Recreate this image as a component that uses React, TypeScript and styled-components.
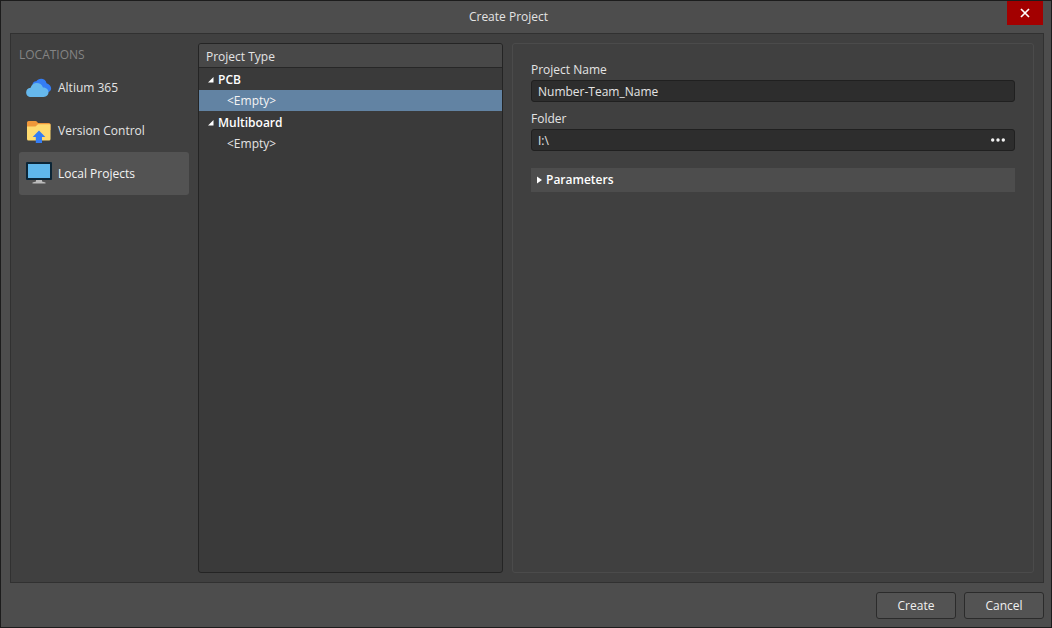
import React, { useState } from 'react';
import styled, { createGlobalStyle } from 'styled-components';

const GlobalStyle = createGlobalStyle`
  *, *::before, *::after { box-sizing: border-box; }
  body { margin: 0; background: #4d4d4d; }
  body, button, input {
    font-family: "Open Sans", "Noto Sans", sans-serif;
    font-size: 12px;
    line-height: 16px;
    color: #e4e4e4;
  }
  button { border: 0; padding: 0; background: none; text-align: left; }
`;

const Dialog = styled.main`
  display: flex;
  flex-direction: column;
  min-height: 100vh;
  padding: 0 7px 0 9px;
  border: 1px solid #1c1c1c;
  background: #4d4d4d;
`;

const TitleBar = styled.header`
  display: grid;
  grid-template-columns: 1fr 36px;
  height: 32px;
  padding-right: 1px;
`;

const Title = styled.h1`
  margin: 0;
  font-size: 12px;
  font-weight: 400;
  line-height: 32px;
  text-align: center;
`;

const CloseButton = styled.button`
  display: flex;
  align-items: center;
  justify-content: center;
  height: 24px;
  background: #a30000;
`;

const Body = styled.div`
  flex: 1;
  display: grid;
  grid-template-columns: 170px 305px 1fr;
  column-gap: 9px;
  padding: 9px 9px 9px 8px;
  border: 1px solid #313131;
  background: #404040;
`;

const Locations = styled.nav`
  display: flex;
  flex-direction: column;
`;

const LocationsHeading = styled.h2`
  margin: 0 0 3px;
  padding-top: 4px;
  font-size: 12px;
  font-weight: 400;
  line-height: 16px;
  color: #848484;
`;

const LocationButton = styled.button<{ $active?: boolean }>`
  display: flex;
  align-items: center;
  gap: 6px;
  height: 43px;
  padding-left: 7px;
  border-radius: 3px;
  color: ${(p) => (p.$active ? '#f4f4f4' : '#e4e4e4')};
  background: ${(p) => (p.$active ? '#535353' : 'transparent')};
`;

const TypePanel = styled.section`
  border: 1px solid #242424;
  border-radius: 3px;
  background: #3a3a3a;
`;

const TypeHeading = styled.h2`
  margin: 0 0 1px;
  padding: 2px 7px 0;
  border-bottom: 1px solid #272727;
  border-radius: 2px 2px 0 0;
  background: #484848;
  font-size: 12px;
  font-weight: 400;
  line-height: 21px;
`;

const Group = styled.div`
  display: flex;
  flex-direction: column;
  margin-bottom: 1px;
`;

const GroupButton = styled.button`
  display: flex;
  align-items: center;
  gap: 4px;
  height: 21px;
  padding-left: 9px;
  font-weight: 600;
  color: #ffffff;
`;

const TypeButton = styled.button<{ $selected: boolean }>`
  height: 21px;
  padding-left: 28px;
  color: ${(p) => (p.$selected ? '#f4f4f4' : '#e4e4e4')};
  background: ${(p) => (p.$selected ? '#6283a3' : 'transparent')};
`;

const Details = styled.form`
  display: flex;
  flex-direction: column;
  padding: 18px;
  border: 1px solid #4b4b4b;
  border-radius: 3px;
`;

const Field = styled.div`
  display: flex;
  flex-direction: column;
  gap: 2px;
  margin-bottom: 9px;
`;

const InputBox = styled.div`
  display: flex;
  align-items: center;
  height: 22px;
  border: 1px solid #202020;
  border-radius: 3px;
  background: #2d2d2d;
`;

const TextInput = styled.input`
  flex: 1;
  min-width: 0;
  padding: 2px 6px 0;
  border: 0;
  outline: 0;
  background: transparent;
`;

const BrowseButton = styled.button`
  display: flex;
  align-items: center;
  justify-content: center;
  width: 32px;
  height: 20px;
`;

const SectionButton = styled.button`
  display: flex;
  align-items: center;
  gap: 4px;
  height: 24px;
  margin-top: 8px;
  padding-left: 6px;
  background: #4d4d4d;
  font-weight: 600;
  color: #ffffff;
`;

const Footer = styled.footer`
  display: flex;
  justify-content: flex-end;
  gap: 8px;
  padding: 9px 0 8px;
`;

const ActionButton = styled.button`
  width: 80px;
  height: 27px;
  border: 1px solid #2b2b2b;
  border-radius: 3px;
  background: #535353;
  text-align: center;
  color: #f0f0f0;
`;

const CloudIcon = () => (
  <svg width="26" height="26" viewBox="0 0 26 26" aria-hidden="true">
    <path d="M7 12C5.500 9 7.500 6 10.300 6.200C12.500 2.500 19.500 2.600 20.600 8.200C27 10.500 26.500 17.500 20 17.500H10Z" fill="#347df4" />
    <path d="M5.300 22C-1.500 22 -1.400 13.200 4.600 12.800C6 6.700 15 6.300 17 12.400C24.300 12.400 24.200 22 17.500 22Z" fill="#66b8ec" />
  </svg>
);

const FolderIcon = () => (
  <svg width="26" height="26" viewBox="0 0 26 26" aria-hidden="true">
    <path d="M1 12V4.500Q1 3 2.500 3H9.500Q10.500 3 11 3.800L12 5H23Q24.500 5 24.500 6.500V12Z" fill="#f0983a" />
    <path d="M1 8.500H9.500L12 6.300H24.500V21Q24.500 22.500 23 22.500H2.500Q1 22.500 1 21Z" fill="#ffdb70" />
    <path d="M13 12.500L19.300 19H16V25H9.800V19H6.700Z" fill="#347df4" />
  </svg>
);

const MonitorIcon = () => (
  <svg width="26" height="26" viewBox="0 0 26 26" aria-hidden="true">
    <rect x="0" y="1" width="26" height="18" rx="1" fill="#0c2637" />
    <rect x="2" y="3" width="22" height="14" fill="#60b8ec" />
    <path d="M10 19H16V20.500L19.500 21.500V22.500H6.500V21.500L10 20.500Z" fill="#bcbcbc" />
  </svg>
);

const CloseIcon = () => (
  <svg width="10" height="10" viewBox="0 0 10 10" aria-hidden="true">
    <path d="M1 1L9 9M9 1L1 9" stroke="#ffffff" strokeWidth="1.700" />
  </svg>
);

const ExpandedIcon = () => (
  <svg width="6" height="6" viewBox="0 0 6 6" aria-hidden="true">
    <path d="M5.500 0V5.500H0Z" fill="#ffffff" />
  </svg>
);

const CollapsedIcon = () => (
  <svg width="5" height="8" viewBox="0 0 5 8" aria-hidden="true">
    <path d="M0 0.500L5 4L0 7.500Z" fill="#ffffff" />
  </svg>
);

const DotsIcon = () => (
  <svg width="16" height="4" viewBox="0 0 16 4" aria-hidden="true">
    <circle cx="2.700" cy="2" r="1.700" fill="#f2f2f2" />
    <circle cx="8" cy="2" r="1.700" fill="#f2f2f2" />
    <circle cx="13.300" cy="2" r="1.700" fill="#f2f2f2" />
  </svg>
);

const locations = [
  { name: 'Altium 365', Icon: CloudIcon },
  { name: 'Version Control', Icon: FolderIcon },
  { name: 'Local Projects', Icon: MonitorIcon },
];

const projectTypes = ['PCB', 'Multiboard'];

export default function App() {
  const [location, setLocation] = useState('Local Projects');
  const [selectedType, setSelectedType] = useState('PCB');
  const [closedGroups, setClosedGroups] = useState<string[]>([]);
  const [parametersOpen, setParametersOpen] = useState(false);

  const toggleGroup = (name: string) =>
    setClosedGroups((groups) =>
      groups.includes(name) ? groups.filter((g) => g !== name) : [...groups, name],
    );

  return (
    <>
      <GlobalStyle />
      <Dialog>
        <TitleBar>
          <Title>Create Project</Title>
          <CloseButton type="button" aria-label="Close">
            <CloseIcon />
          </CloseButton>
        </TitleBar>
        <Body>
          <Locations aria-label="Locations">
            <LocationsHeading>LOCATIONS</LocationsHeading>
            {locations.map(({ name, Icon }) => (
              <LocationButton
                key={name}
                type="button"
                $active={name === location}
                onClick={() => setLocation(name)}
              >
                <Icon />
                {name}
              </LocationButton>
            ))}
          </Locations>
          <TypePanel>
            <TypeHeading>Project Type</TypeHeading>
            {projectTypes.map((name) => {
              const open = !closedGroups.includes(name);
              return (
                <Group key={name}>
                  <GroupButton type="button" aria-expanded={open} onClick={() => toggleGroup(name)}>
                    {open ? <ExpandedIcon /> : <CollapsedIcon />}
                    {name}
                  </GroupButton>
                  {open && (
                    <TypeButton
                      type="button"
                      $selected={name === selectedType}
                      onClick={() => setSelectedType(name)}
                    >
                      &lt;Empty&gt;
                    </TypeButton>
                  )}
                </Group>
              );
            })}
          </TypePanel>
          <Details id="project-form" onSubmit={(e) => e.preventDefault()}>
            <Field>
              <label htmlFor="project-name">Project Name</label>
              <InputBox>
                <TextInput id="project-name" defaultValue="Number-Team_Name" />
              </InputBox>
            </Field>
            <Field>
              <label htmlFor="folder">Folder</label>
              <InputBox>
                <TextInput id="folder" defaultValue={'I:\\'} />
                <BrowseButton type="button" aria-label="Browse">
                  <DotsIcon />
                </BrowseButton>
              </InputBox>
            </Field>
            <SectionButton
              type="button"
              aria-expanded={parametersOpen}
              onClick={() => setParametersOpen(!parametersOpen)}
            >
              {parametersOpen ? <ExpandedIcon /> : <CollapsedIcon />}
              Parameters
            </SectionButton>
          </Details>
        </Body>
        <Footer>
          <ActionButton type="submit" form="project-form">Create</ActionButton>
          <ActionButton type="button">Cancel</ActionButton>
        </Footer>
      </Dialog>
    </>
  );
}
